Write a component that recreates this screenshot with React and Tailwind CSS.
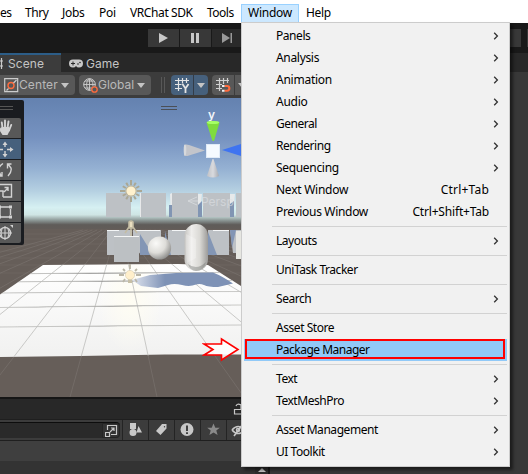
import React from "react";

const T = {
  a: "tracking-[-0.25px]",
  b: "tracking-[-0.32px]",
  c: "tracking-[-0.45px]",
  d: "tracking-[-0.5px]",
  e: "tracking-[-0.18px]",
};

const menu = [
  ["Panels", ">", T.c], ["Analysis", ">", T.b], ["Animation", ">", T.a], ["Audio", ">", T.a], ["General", ">", T.d],
  ["Rendering", ">", T.c], ["Sequencing", ">", T.b], ["Next Window", "Ctrl+Tab", T.a], ["Previous Window", "Ctrl+Shift+Tab", T.b],
  null, ["Layouts", ">", T.c], null, ["UniTask Tracker", "", T.c], null, ["Search", ">", T.c], null,
  ["Asset Store", "", T.c], ["Package Manager", "", T.d], null, ["Text", ">", T.c], ["TextMeshPro", ">", T.c], null,
  ["Asset Management", ">", T.c], ["UI Toolkit", ">", T.c],
];

function MenuRow({ label, end, track }) {
  const selected = label === "Package Manager";
  return (
    <div className={"relative flex h-[22px] items-center pl-8 " + (selected ? "bg-[#91c9f7]" : "")}>
      <span className={"flex-1 whitespace-nowrap " + track}>{label}</span>
      {end === ">" && (
        <svg className="mr-[8px]" width="6" height="8" viewBox="0 0 6 8"><path d="M1.200 .7 4.400 4 1.200 7.300" fill="none" stroke="#333" strokeWidth="1.300" /></svg>
      )}
      {end && end !== ">" && <span className={"mr-[18px] whitespace-nowrap " + (end === "Ctrl+Tab" ? "tracking-[0.2px]" : T.e)}>{end}</span>}
      {selected && <div className="absolute left-px right-0.5 top-0 h-5 border-2 border-[#f00]" />}
    </div>
  );
}

function WindowMenu() {
  return (
    <div className="absolute left-[241px] top-[22px] h-[445px] w-[269px] border border-[#ccc] bg-[#f1f1f1] pl-[2px] pr-[2px] pt-[2px] shadow-[3px_3px_3px_rgba(0,0,0,0.5)]">
      {menu.map((m, i) =>
        m ? <MenuRow key={i} label={m[0]} end={m[1]} track={m[2]} /> : (
          <div key={i} className="flex h-[7px] items-center pl-7"><div className="h-px w-full bg-[#d2d2d2]" /></div>
        )
      )}
    </div>
  );
}

function Sun({ x, y }) {
  return (
    <g transform={`translate(${x} ${y})`}>
      {[0, 30, 60, 90, 120, 150, 180, 210, 240, 270, 300, 330].map((a) => (
        <path key={a} d={a % 90 === 0 ? "M0-6V-11" : "M0-6V-9.500"} stroke="#aaa794" strokeWidth="2" transform={`rotate(${a})`} />
      ))}
      <circle r="5.800" fill="#b9b29a" /><circle r="4.600" fill="#fff1cd" />
    </g>
  );
}

function Scene() {
  const lines = [-8, -7, -6, -5, -4, -3, -2, -1, 0, 1, 2, 3, 4, 5, 6, 7, 8];
  return (
    <svg className="block" width="241" height="299" viewBox="0 98 241 299">
      <defs>
        <linearGradient id="sky" x1="0" x2="0" y1="98" y2="230" gradientUnits="userSpaceOnUse">
          <stop offset="0" stopColor="#6482b0" /><stop offset=".3" stopColor="#7692c0" /><stop offset=".53" stopColor="#94b0d2" />
          <stop offset=".7" stopColor="#b4cfe1" /><stop offset=".83" stopColor="#d6f0f2" /><stop offset=".885" stopColor="#cfe5e4" />
          <stop offset=".93" stopColor="#87918f" /><stop offset=".96" stopColor="#5f5c59" /><stop offset="1" stopColor="#635c58" />
        </linearGradient>
        <linearGradient id="floor" x1="0" x2="0" y1="0" y2="1"><stop offset="0" stopColor="#fff" /><stop offset="1" stopColor="#f1f1f0" /></linearGradient>
        <radialGradient id="ball" cx=".35" cy=".3" r=".75"><stop offset="0" stopColor="#fafaf8" /><stop offset=".55" stopColor="#deddd9" /><stop offset="1" stopColor="#8c8c8a" /></radialGradient>
        <linearGradient id="pill"><stop offset="0" stopColor="#c4c3c0" /><stop offset=".3" stopColor="#efeeec" /><stop offset=".65" stopColor="#dad9d5" /><stop offset="1" stopColor="#9c9b99" /></linearGradient>
        <linearGradient id="cone"><stop offset="0" stopColor="#bfc1c6" /><stop offset=".5" stopColor="#d9dade" /><stop offset="1" stopColor="#a6a9b0" /></linearGradient>
        <linearGradient id="shade" x1="132" x2="165" gradientUnits="userSpaceOnUse"><stop offset="0" stopColor="#dfe4ee" /><stop offset="1" stopColor="#7e92b6" /></linearGradient>
        <radialGradient id="glow"><stop offset="0" stopColor="#fffdf2" /><stop offset="1" stopColor="#fffdf2" stopOpacity="0" /></radialGradient>
        <clipPath id="plane"><path d="M43 265L178 264L208 265L241 286V354.500L0 357V294.500Z" /></clipPath>
      </defs>
      <rect y="98" width="241" height="132" fill="url(#sky)" />
      <rect y="229" width="241" height="168" fill="#665e59" />
      <g stroke="#8b8581" strokeWidth=".8" opacity=".45">
        {lines.map((i) => <path key={i} d={`M${(119 + (157 + 87 * i - 119) * 0.055).toFixed(1)} 230L${157 + 87 * i} 397`} />)}
        <path d="M0 234H241M0 239H241M0 244H241M0 251H241M0 258H241M0 265H241M0 273H241" opacity=".5" />
      </g>
      <g fill="#bdc1c5">
        <path d="M106 193h25v24h-25zM140 193h26v24h-26zM172 193h26v24h-26zM203 193h27v24h-27zM236 193h5v24h-5z" />
        <path d="M107 230h25v25h-25zM133 230h28v25h-20l-8-10zM168 230h24v25h-24zM208 230h21v25h-21zM230 230h11v23h-8z" />
      </g>
      <path d="M140 193h1v24h-1zM170 194l2-1v24h-1zM198 194h4l-2 15h-2zM230 194h5l-1 10h-4z" fill="#e7e9ea" />
      <path d="M198 205l4-4v16h-4zM230 204l4-3v16h-4zM169 205h3v12h-3z" fill="#8195b3" />
      <path d="M140 234l13 21h-13zM165 231l6 24h-6zM208 232l9 23h-9zM230 230h6l-4 18z" fill="#8396b5" />
      <path d="M107 230.500h12M135 230.500h25M172 230.500h18M213 230.500h16" stroke="#f4f6f7" strokeWidth="1" />
      <path d="M236 231h5v28h-5z" fill="#e7e7e2" />
      <path d="M43 265L178 264L208 265L241 286V354.500L165 354.500L80 356L0 357V294.500Z" fill="url(#floor)" />
      <ellipse cx="130" cy="298" rx="32" ry="55" fill="url(#glow)" clipPath="url(#plane)" />
      <g clipPath="url(#plane)" stroke="#c3c3c1" strokeWidth=".9">
        {lines.map((i) => <path key={i} d={`M119 220L${157 + 87 * i} 397`} />)}
        <path d="M0 274L90 273L241 272.500M0 282L100 281L241 280.500M0 293L110 292L241 291.500M0 307.500L110 306L241 305M0 327L100 326L241 325" />
      </g>
      <path d="M132 280L150 275L176 273L213 272.500Q222 276 233 283.500L218 287Q208 287 204 285Q200 283.500 196 284.500Q190 287 182 285Q174 283 168 285L158 288L141 286Z" fill="url(#shade)" />
      <rect x="114" y="236" width="25" height="26" fill="#bcc0c3" /><path d="M114 236.500h25" stroke="#f4f5f5" />
      <circle cx="159.500" cy="248" r="11.600" fill="url(#ball)" />
      <rect x="184.500" y="224" width="23.500" height="47" rx="11.700" fill="url(#pill)" />
      <path d="M186 234q-1 14 1 29l9-5v-19z" fill="#fff" opacity=".25" />
      <path d="M188 264q9 7 18-2q-2 9-10 9q-6 0-8-7" fill="#6f716d" opacity=".4" />
      <Sun x={131} y={191} />
      <path d="M129 228v-6q2-2 4 0v6zM129 227l-4 6M133 227l4 6M131 227v9" fill="#eadfc0" stroke="#c4bca3" strokeWidth="1.600" />
      <g transform="translate(130 275)">
        <path d="M0-6V-11M-6 0H-11M6 0H11M-5-4L-7-6M5-4L7-6M-5 4L-7 7M5 4L7 7" stroke="#bbb7a8" strokeWidth="1.800" />
        <path d="M-2 3h4v5h-4z" fill="#c7bfa5" /><circle r="4.600" fill="#ffefcb" stroke="#d5cdb5" strokeWidth=".6" />
      </g>
      <path d="M161 106.500h16M161 109.500h16" stroke="#4b4f57" />
      <text x="208" y="118.500" fontSize="12" fontFamily="Inter, sans-serif" fontWeight="600" fill="#f3f6fa">y</text>
      <path d="M206.500 122.500q6.500-3 13 0L214 141h-1.500z" fill="#7fdc3d" /><ellipse cx="213" cy="122.500" rx="6.300" ry="1.600" fill="#a6ff66" />
      <path d="M184 145q2-1 5 0l16 5.500-16 5q-3 1-5 0z" fill="#c3c5cb" /><ellipse cx="185" cy="150" rx="1.300" ry="5.500" fill="#d7d9dc" />
      <path d="M222 150l19-6v12z" fill="#3f74f0" />
      <path d="M212.500 159h1l5.500 17q-6 3-12 0z" fill="url(#cone)" />
      <rect x="206.500" y="144.500" width="13" height="13" fill="#f5faff" stroke="#dfeaf7" />
      <g opacity=".6">
        <path d="M197 197l-9 4 9 4M188 201h10" fill="none" stroke="#e4e7ea" strokeWidth="1" />
        <text x="201" y="205.500" fontSize="12" fontFamily="Inter, sans-serif" fill="#dfe2e5">Persp</text>
      </g>
      <path d="M0 100h22q2 0 2 2v141q0 2-2 2H0z" fill="#1a1c20" />
      <path d="M0 106.500h13M0 109.500h13" stroke="#555" />
      <path d="M0 118h19q2 0 2 2v18H0z" fill="#585858" /><path d="M0 139h21v20H0z" fill="#46607c" />
      <path d="M0 160h21v20H0zM0 181h21v20H0zM0 202h21v20H0zM0 223h21v18q0 2-2 2H0z" fill="#585858" />
      <g fill="none" stroke="#d2d2d2" strokeWidth="1.900" strokeLinecap="round"><path d="M2.500 128L1.800 122.500M5 127.500V120.500M7.500 128L8.500 121.500M9 130.500L11.200 125M2.500 132L-1 127.500" /></g>
      <path d="M1.500 127h7.500l1 3-2.500 5H2.500L0 131z" fill="#d2d2d2" />
      <g fill="none" stroke="#d2d2d2" strokeWidth="1.400">
        <path d="M5 143v4M5 151v5M0 149.500h3M7 149.500h4" />
        <path d="M8 176q4-4 3-8l-3-4M3 163.500q-5 3-4 8l2 4M7.500 168.500v-4.500h4M-2 176h4v-4" />
        <path d="M0 184.500h11.500V197H3M0 191h3v6M4 192l4-4M4.500 187.500H8V191" />
        <path d="M1 207h8M1 217h8M0 208v8M10.500 209v6" />
        <circle cx="5" cy="233" r="5.500" /><path d="M-2 233H12M5 226V240M2 229q-2 4 0 8M8 229q2 4 0 8" strokeWidth="1" />
      </g>
      <path d="M2.500 145L5 141.500 7.500 145zM2.500 154L5 157.500 7.500 154zM10 147l3.500 2.500-3.500 2.500zM9 205.500h3v3H9zM9 215.500h3v3H9zM-1 205.500h2v3h-2zM-1 215.500h2v3h-2zM10 225h3v3z" fill="#d2d2d2" />
    </svg>
  );
}

const Caret = () => <svg className="shrink-0" width="8" height="5" viewBox="0 0 8 5"><path d="M0 0h8L4 5z" fill="#c4c4c4" /></svg>;

function SceneToolbar() {
  return (
    <div className="flex h-[26px] w-[241px] items-center overflow-hidden bg-[#3c3c3c] text-[12px] text-[#b8b8b8]">
      <div className="flex h-5 w-[75px] shrink-0 items-center rounded-r-sm bg-[#585858] pl-1">
        <svg width="15" height="15" viewBox="0 0 15 15" fill="none"><path d="M.7.7h13v13H.7z" stroke="#ccc" strokeWidth="1.200" /><circle cx="7" cy="7.500" r="3" stroke="#ff6b3d" strokeWidth="1.400" /><path d="M2.500 12.500l2-2M9.500 5l3-3" stroke="#ccc" strokeWidth="1.200" /></svg>
        <span className="w-[42px] shrink-0 tracking-[0.1px]">Center</span><Caret />
      </div>
      <div className="ml-1 flex h-5 w-[72px] shrink-0 items-center rounded-sm bg-[#585858] pl-1">
        <svg width="15" height="15" viewBox="0 0 15 15" fill="none" stroke="#ccc"><circle cx="6.500" cy="6.500" r="5.800" /><path d="M.5 6.500h12M6.500.5v12M2 3h9M2 10h9M6 .5q-5 6 0 12M7 .5q4 4 3 8" strokeWidth=".9" /><circle cx="11.500" cy="11.500" r="2.700" fill="#585858" stroke="#ff6b3d" strokeWidth="1.300" /></svg>
        <span className="w-[39px] shrink-0">Global</span><Caret />
      </div>
      <svg className="ml-[10px] shrink-0" width="4" height="16"><path d="M.5 0v16M3.500 0v16" stroke="#585858" /></svg>
      <div className="ml-[6px] flex h-5 w-[37px] shrink-0 items-center rounded-sm bg-[#46607c] pl-1">
        <svg width="15" height="15" viewBox="0 0 15 15" fill="none" stroke="#e4e4e4" strokeWidth="1.200"><path d="M3.500 0v13M7.500 0v5.500M11.500 0v5M0 2.500h14M0 6.500h6.500M0 10.500h7" /><path d="M7.500 6l3 4.500 3-4.500M10.500 10v5" strokeWidth="1.800" /></svg>
        <i className="ml-[3px] mr-[3px] h-5 w-px bg-[#333c48]" /><Caret />
      </div>
      <div className="ml-1 flex h-5 w-[40px] shrink-0 items-center rounded-sm bg-[#585858] pl-1">
        <svg width="15" height="15" viewBox="0 0 15 15" fill="none"><path d="M3.500 0v13M7.500 0v6M11.500 0v5M0 2.500h13M0 6.500h6M0 10.500h6" stroke="#d0d0d0" strokeWidth="1.200" /><path d="M8.500 8H11a2.200 2.200 0 010 4.700H8.500" stroke="#ff6b3d" strokeWidth="2.100" /><path d="M6 8h2.500M6 12.700h2.500" stroke="#eee" strokeWidth="2.100" /></svg>
        <i className="ml-[3px] mr-[3px] h-5 w-px bg-[#3c3c3c]" /><Caret />
      </div>
    </div>
  );
}

function ProjectBar() {
  const icons = [
    <path key="a" d="M3 2h6v6H3zM6 8a3.500 3.500 0 110 7 3.500 3.500 0 010-7zM11.500 5L15 11.500H9.500z" fill="#c8c8c8" />,
    <path key="b" d="M9 3h4.500v4.500l-6 6.500L3 10z M11.500 5a.7.7 0 100 1.400.7.7 0 000-1.400z" fill="#c8c8c8" fillRule="evenodd" />,
    <g key="c"><circle cx="8" cy="8.500" r="6.500" fill="#c8c8c8" /><path d="M8 4.500V10M8 11.300v1.800" stroke="#333" strokeWidth="1.800" /></g>,
    <path key="d" d="M8.500 2.500l1.800 4.200h4.500l-3.500 2.800 1.300 4.500-4.100-2.600L4.400 14l1.300-4.500L2.200 6.700h4.500z" fill="#8a8a8a" />,
  ];
  return (
    <div className="flex h-[22px] w-[241px] items-center overflow-hidden border-b border-t border-[#1f1f1f] bg-[#3c3c3c]">
      <div className="flex h-4 w-[120px] shrink-0 items-center justify-end rounded-r border-t border-[#0d0d0d] bg-[#2a2a2a]">
        <div className="flex h-[15px] w-[18px] items-center justify-center rounded-r border border-[#242424] bg-[#333]">
          <svg className="shrink-0" width="13" height="13" viewBox="0 0 13 13" fill="none" stroke="#c8c8c8"><path d="M2.500 6V1.500h9v9H6M.5 8.500h4v4h-4zM5 8l4-4M6 4h3v3" strokeWidth="1.200" /></svg>
        </div>
      </div>
      <div className="ml-[2px] flex shrink-0">
        {icons.map((ic, i) => <div key={i} className="flex h-5 w-[26px] items-center justify-center border-l border-[#242424]"><svg width="18" height="18" viewBox="0 0 18 18">{ic}</svg></div>)}
        <div className="flex h-5 w-[26px] items-center border-l border-[#242424] pl-1"><svg width="15" height="14" viewBox="0 0 15 14" fill="none" stroke="#c8c8c8" strokeWidth="1.600"><path d="M1 7q6-7 13 0-7 7-13 0M3 13L12 1" /><circle cx="7" cy="7" r="1.500" /></svg></div>
      </div>
    </div>
  );
}

export default function App() {
  return (
    <div className="relative flex h-[474px] w-[528px] flex-col overflow-hidden bg-[#383838] font-['Inter',sans-serif]">
      <div className="flex h-[23px] shrink-0 items-center bg-white pt-[3px] font-['Noto_Sans','Open_Sans',sans-serif] text-[12px] text-black">
        <span className="w-[25px] shrink-0 tracking-[-0.5px]">es</span>
        <span className="w-[37px] shrink-0 tracking-[-0.45px]">Thry</span>
        <span className="w-[37px] shrink-0 tracking-[-0.3px]">Jobs</span>
        <span className="w-[31px] shrink-0 tracking-[-0.3px]">Poi</span>
        <span className="w-[77px] shrink-0 whitespace-nowrap tracking-[-0.4px]">VRChat SDK</span>
        <span className="w-[34px] shrink-0 tracking-[-0.5px]">Tools</span>
        <span className="flex h-[19px] w-[58px] shrink-0 items-center justify-center border border-[#99d1ff] bg-[#cce8ff] tracking-[-0.25px]">Window</span>
        <span className="ml-[7px] tracking-[-0.35px]">Help</span>
      </div>
      <div className="flex h-[30px] shrink-0 items-center bg-[#191919]">
        <div className="ml-[148px] flex gap-px">
          <div className="flex h-[18px] w-[31px] items-center justify-center bg-[#383838]"><svg width="9" height="10" viewBox="0 0 9 10"><path d="M0 0l9 5-9 5z" fill="#c8c8c8" /></svg></div>
          <div className="flex h-[18px] w-[31px] items-center justify-center bg-[#383838]"><svg width="9" height="10" viewBox="0 0 9 10"><path d="M0 0h3v10H0zM5 0h3v10H5z" fill="#c8c8c8" /></svg></div>
          <div className="flex h-[18px] w-[31px] items-center justify-center bg-[#2a2a2a]"><svg width="11" height="10" viewBox="0 0 11 10"><path d="M0 0l8 5-8 5zM8.500 0h1.500v10H8.500z" fill="#999" /></svg></div>
        </div>
        <div className="ml-auto flex gap-[6px]"><div className="h-[18px] w-3 bg-[#383838]" /><div className="h-[18px] w-px bg-[#383838]" /></div>
      </div>
      <div className="flex h-[19px] shrink-0 bg-[#282828] text-[12px] text-[#c4c4c4]">
        <div className="flex w-[61px] items-center border-t-2 border-[#2c5d87] bg-[#3c3c3c]">
          <svg width="8" height="12" viewBox="0 0 8 12"><path d="M1.500 0v11M0 3h3M0 8h3" stroke="#ccc" strokeWidth="1.200" /></svg><span className="tracking-[0.1px]">Scene</span>
        </div>
        <div className="flex items-center pl-2 pt-[2px]">
          <svg width="14" height="9" viewBox="0 0 14 9"><path d="M4 .5h6a4 4 0 110 8Q8 8.500 7 7 6 8.500 4 8.500a4 4 0 010-8z" fill="#c8c8c8" /><path d="M2 4.500h4M4 2.500v4" stroke="#282828" /><circle cx="9" cy="5" r=".8" fill="#282828" /><circle cx="11" cy="3.500" r=".8" fill="#282828" /></svg>
          <span className="ml-[3px]">Game</span>
        </div>
      </div>
      <SceneToolbar />
      <Scene />
      <div className="flex h-[22px] w-[241px] shrink-0 items-center justify-end overflow-hidden border-t-2 border-[#161616] bg-[#282828]">
        <svg width="8" height="12" viewBox="0 0 8 12"><path d="M1.500 11V6.500H9V11zM3 3q1-3 5-1v4" fill="none" stroke="#c8c8c8" strokeWidth="1.200" /></svg>
      </div>
      <ProjectBar />
      <div className="h-[20px] w-[241px] shrink-0 bg-[#3f3f3f]" />
      <div className="flex flex-1 bg-[#333]"><div className="ml-[255px] flex w-[15px] items-center justify-center border-r-2 border-[#191919] bg-[#2d2d2d] pt-1"><svg width="8" height="4" viewBox="0 0 8 4"><path d="M4 0l4 4H0z" fill="#c8c8c8" /></svg></div><div className="flex-1 bg-[#383838]" /></div>
      <div className="font-['Noto_Sans','Open_Sans',sans-serif] text-[12px] text-black"><WindowMenu /></div>
      <svg className="absolute left-[202px] top-[337px]" width="39" height="25" viewBox="0 0 39 25"><path d="M2 7h17.500V2L36 12.500 19.500 23v-5H2l9-5.500z" fill="#fff" fillOpacity=".85" stroke="#f00" strokeWidth="1.600" /></svg>
    </div>
  );
}
